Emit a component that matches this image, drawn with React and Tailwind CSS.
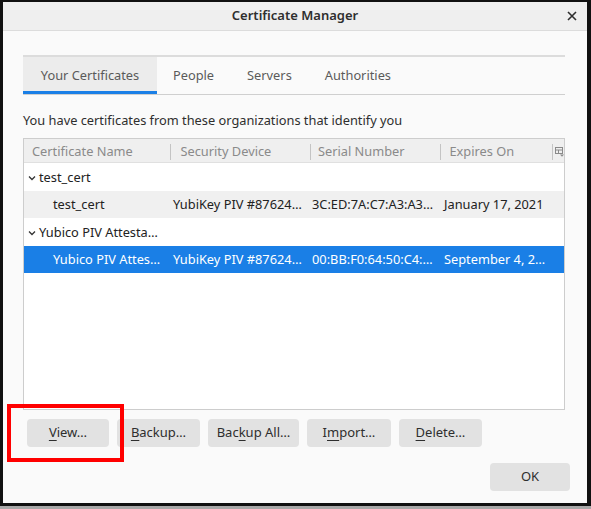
import React from "react";

const F = { fontFamily: '"Noto Sans", "Open Sans", sans-serif' };

function Chevron({ className = "" }) {
  return (
    <svg width="8" height="6" viewBox="0 0 8 6" className={className}>
      <path d="M1 1.5 L4 4.5 L7 1.5" fill="none" stroke="currentColor" strokeWidth="1.3" />
    </svg>
  );
}

function ColIcon() {
  return (
    <svg width="9" height="10" viewBox="0 0 9 10">
      <rect x="0.5" y="0.5" width="7" height="6" fill="none" stroke="#8a8a8a" strokeWidth="1" />
      <line x1="0.5" y1="3" x2="7.5" y2="3" stroke="#8a8a8a" strokeWidth="1" />
      <line x1="3.5" y1="3" x2="3.5" y2="7" stroke="#8a8a8a" strokeWidth="1" />
      <path d="M5 7.5 L9 7.5 L7 9.8 Z" fill="#8a8a8a" />
    </svg>
  );
}

function Btn({ children, w }) {
  return (
    <div className={`h-[28px] ${w} rounded-[4px] bg-[#e2e2e2] flex items-center justify-center text-[13px] text-[#2e2e2e]`}>
      {children}
    </div>
  );
}

function U({ c }) {
  return <span className="underline underline-offset-[3px] decoration-1">{c}</span>;
}

export default function App() {
  const cols = ["w-[147px]", "w-[140px]", "w-[131px]", "w-[112px]"];
  return (
    <div className="w-[591px] h-[509px] bg-[#a8a8a8] relative overflow-hidden" style={F}>
      <div className="w-[591px] h-[506px] border-l-[3px] border-r-4 border-t-2 border-b-[3px] border-[#111] bg-[#fafafa] flex flex-col">
        {/* title bar */}
        <div className="h-[29px] shrink-0 bg-[#efefef] border-b border-[#dcdcdc] relative flex items-center justify-center">
          <span className="text-[13px] font-semibold text-[#2e2e2e]">Certificate Manager</span>
          <svg className="absolute right-[10px] top-[9px]" width="10" height="10" viewBox="0 0 10 10">
            <path d="M1 1 L9 9 M9 1 L1 9" stroke="#2e2e2e" strokeWidth="1.6" />
          </svg>
        </div>
        <div className="pl-[20px] pr-[22px] flex flex-col">
          {/* tabs */}
          <div className="mt-[24px] border-t-2 border-[#dcdcdc] border-b border-b-[#cfcfcf] flex h-[40px] text-[12.8px] text-[#5a5a5a]">
            <div className="w-[134px] bg-[#ececec] border-b-[3px] border-[#1a7fe6] flex items-center justify-center pt-[3px]">
              Your Certificates
            </div>
            <div className="ml-[16px] flex items-center pt-[1px]">People</div>
            <div className="ml-[33px] flex items-center pt-[1px]">Servers</div>
            <div className="ml-[33px] flex items-center pt-[1px]">Authorities</div>
          </div>
          {/* paragraph */}
          <div className="mt-[16px] text-[12.8px] text-[#2e2e2e] leading-[18px]">
            You have certificates from these organizations that identify you
          </div>
          {/* table */}
          <div className="mt-[9px] h-[272px] border border-[#cdcdcd] bg-white flex flex-col text-[12.8px]">
            <div className="h-[24px] shrink-0 bg-[#efefef] border-b border-[#e0e0e0] flex items-center pt-[2px] text-[#8a8a8a]">
              <div className={`${cols[0]} pl-[8px]`}>Certificate Name</div>
              <div className={`${cols[1]} flex items-center`}>
                <div className="w-px h-[16px] bg-[#c4c4c4]" />
                <span className="pl-[9px]">Security Device</span>
              </div>
              <div className={`${cols[2]} flex items-center`}>
                <div className="w-px h-[16px] bg-[#c4c4c4]" />
                <span className="pl-[7px]">Serial Number</span>
              </div>
              <div className={`${cols[3]} flex items-center`}>
                <div className="w-px h-[16px] bg-[#c4c4c4]" />
                <span className="pl-[8px]">Expires On</span>
              </div>
              <div className="flex-1 flex items-center">
                <div className="w-px h-[16px] bg-[#c4c4c4]" />
                <span className="pl-[2px] flex items-center"><ColIcon /></span>
              </div>
            </div>
            <div className="h-[28px] flex items-center pt-[2px] text-[#222]">
              <Chevron className="ml-[4px] mr-[3px] text-[#333]" />
              <span>test_cert</span>
            </div>
            <div className="h-[27px] flex items-center pt-[1px] bg-[#f0f0f0] text-[#222]">
              <div className={`${cols[0]} pl-[29px]`}>test_cert</div>
              <div className={`${cols[1]} pl-[2px]`}>YubiKey PIV #87624…</div>
              <div className={`${cols[2]} pl-[1px]`}>3C:ED:7A:C7:A3:A3…</div>
              <div className={`${cols[3]} pl-[2px]`}>January 17, 2021</div>
            </div>
            <div className="h-[28px] flex items-center pt-[1px] text-[#222]">
              <Chevron className="ml-[4px] mr-[3px] text-[#333]" />
              <span>Yubico PIV Attesta…</span>
            </div>
            <div className="h-[27px] flex items-center pt-[1px] bg-[#1a7fe6] text-white">
              <div className={`${cols[0]} pl-[29px]`}>Yubico PIV Attes…</div>
              <div className={`${cols[1]} pl-[2px]`}>YubiKey PIV #87624…</div>
              <div className={`${cols[2]} pl-[1px]`}>00:BB:F0:64:50:C4:…</div>
              <div className={`${cols[3]} pl-[2px]`}>September 4, 2…</div>
            </div>
          </div>
          {/* buttons */}
          <div className="mt-[9px] flex gap-[8px] pl-[4px]">
            <Btn w="w-[82px]"><U c="V" />iew…</Btn>
            <Btn w="w-[83px]"><U c="B" />ackup…</Btn>
            <Btn w="w-[91px]">Bac<U c="k" />up All…</Btn>
            <Btn w="w-[84px]">I<U c="m" />port…</Btn>
            <Btn w="w-[83px]"><U c="D" />elete…</Btn>
          </div>
          <div className="mt-[16px] flex justify-end">
            <div className="mr-[-5px]">
              <Btn w="w-[80px]">OK</Btn>
            </div>
          </div>
        </div>
      </div>
      {/* red highlight */}
      <div className="absolute left-[7px] top-[404px] w-[117px] h-[58px] border-4 border-[#ff0000]" />
    </div>
  );
}
